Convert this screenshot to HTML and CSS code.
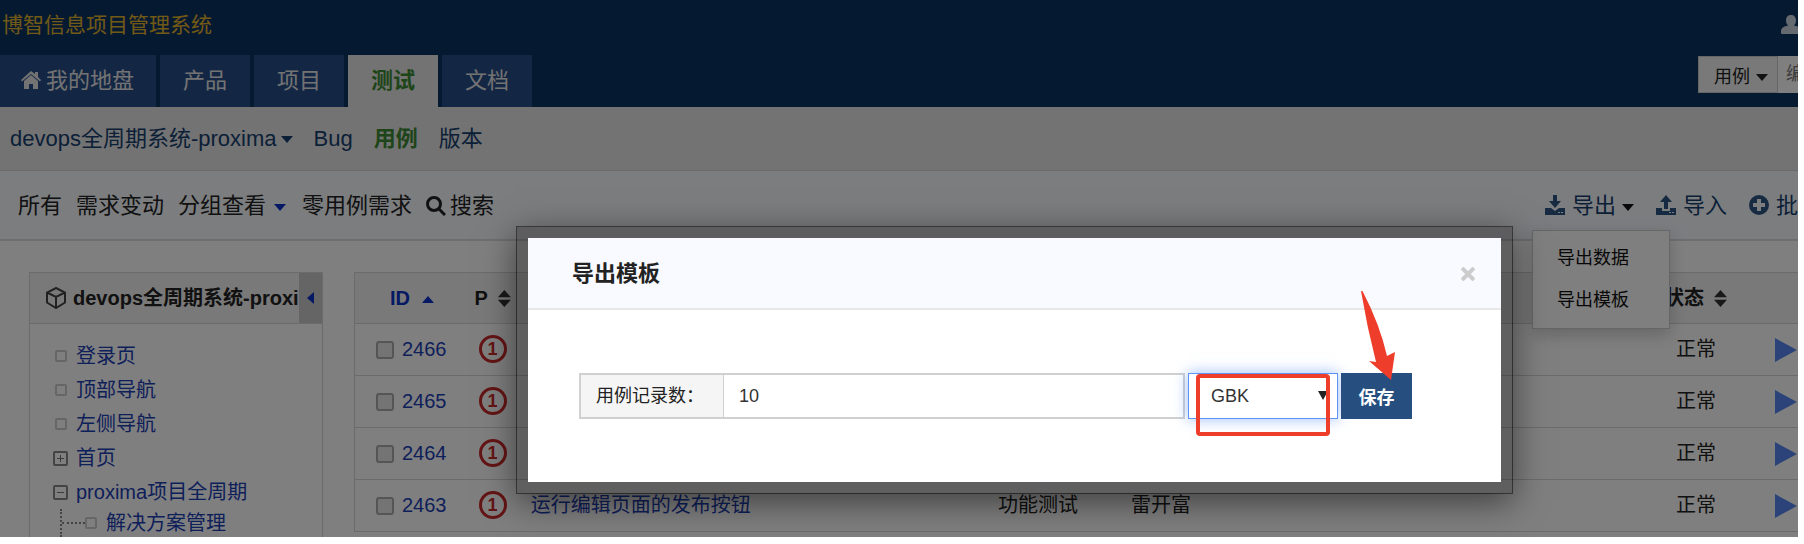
FILE: index.html
```html
<!DOCTYPE html>
<html lang="zh-CN">
<head>
  <meta charset="UTF-8" />
  <meta name="viewport" content="width=device-width, initial-scale=1.0"/>
  <title>导出模板</title>
  <link rel="stylesheet" href="styles.css">
</head>
<body>
  <div class="app">

    <!-- 顶部 -->
    <header class="header">
      <div class="topbar">
        <h1>博智信息项目管理系统</h1>
        <svg class="user" viewBox="0 0 20 19"><path d="M10 0c3 0 5 2 5 5.500c0 2-1 4-2 5c4 1 7 2 7 6V18q0 1-1 1H1q-1 0-1-1v-1.500c0-4 3-5 7-6c-1-1-2-3-2-5C5 2 7 0 10 0z"/></svg>
      </div>
      <div class="mainbar">
        <nav class="tabs">
          <a href="#" class="home"><svg viewBox="0 0 20 18"><path d="M10 0l4 3V1h3v5l3 3-1 1.500L10 3 1 10.500 0 9zM10 4l7 6v8h-5v-5H8v5H3v-8z"/></svg>我的地盘</a>
          <a href="#">产品</a>
          <a href="#">项目</a>
          <a href="#" class="active">测试</a>
          <a href="#">文档</a>
        </nav>
        <form class="search">
          <button type="button">用例<i class="caret"></i></button>
          <input type="text" placeholder="编" aria-label="编号" />
        </form>
      </div>
    </header>

    <nav class="module-menu">
      <a href="#" class="product">devops全周期系统-proxima<i class="caret"></i></a>
      <a href="#">Bug</a>
      <a href="#" class="active">用例</a>
      <a href="#">版本</a>
    </nav>

    <!-- 工具栏 -->
    <div class="toolbar">
      <div class="filters">
        <a href="#">所有</a>
        <a href="#">需求变动</a>
        <a href="#">分组查看<i class="caret blue"></i></a>
        <a href="#">零用例需求</a>
        <a href="#" class="find"><svg viewBox="0 0 20 20"><circle cx="8" cy="8" r="6.500"/><path d="M13 13l6 6"/></svg>搜索</a>
      </div>
      <div class="operations">
        <div class="dropdown">
          <a href="#"><svg viewBox="0 0 20 20"><path d="M8 0h4v6h4l-6 7-6-7h4zM0 13h6l4 3 4-3h6v7H0zM13 17v1h2v-1zM16 17v1h2v-1z"/></svg>导出<i class="caret"></i></a>
          <ul class="dropdown-menu">
            <li><a href="#">导出数据</a></li>
            <li><a href="#">导出模板</a></li>
          </ul>
        </div>
        <a href="#" class="import"><svg viewBox="0 0 20 20"><path d="M10 0l6 7h-4v7H8V7H4zM0 13h6v3h8v-3h6v7H0zM13 17v1h2v-1zM16 17v1h2v-1z"/></svg>导入</a>
        <a href="#" class="batch"><svg viewBox="0 0 20 20"><path fill-rule="evenodd" d="M10 0a10 10 0 1 1 0 20a10 10 0 1 1 0-20zM8 4v4H4v4h4v4h4v-4h4V8h-4V4z"/></svg>批</a>
      </div>
    </div>

    <!-- 内容 -->
    <main class="content">
      <aside class="side">
        <div class="side-head">
          <svg viewBox="0 0 22 22"><path d="M11 1l9 4.500v10L11 21l-9-5.500v-10zM2 5.500l9 4.500 9-4.500M11 10v11"/></svg>
          <strong>devops全周期系统-proxima</strong>
          <button type="button" class="collapse" aria-label="收起"></button>
        </div>
        <ul class="tree">
          <li><i class="leaf"></i><a href="#">登录页</a></li>
          <li><i class="leaf"></i><a href="#">顶部导航</a></li>
          <li><i class="leaf"></i><a href="#">左侧导航</a></li>
          <li><i class="node plus"></i><a href="#">首页</a></li>
          <li><i class="node"></i><a href="#">proxima项目全周期</a></li>
        </ul>
        <ul class="tree children">
          <li><i class="leaf"></i><a href="#">解决方案管理</a></li>
        </ul>
      </aside>

      <table class="cases">
        <colgroup>
          <col class="c-id"><col class="c-pri"><col><col class="c-type"><col class="c-user"><col class="c-status"><col class="c-act">
        </colgroup>
        <thead>
          <tr>
            <th class="id"><a href="#">ID<i class="caret up"></i></a></th>
            <th class="pri">P<i class="sort"></i></th>
            <th></th>
            <th></th>
            <th></th>
            <th class="status">状态<i class="sort"></i></th>
            <th></th>
          </tr>
        </thead>
        <tbody>
          <tr>
            <td><label><input type="checkbox"><a href="#">2466</a></label></td>
            <td><span class="pri-1">1</span></td>
            <td></td><td></td><td></td>
            <td class="status">正常</td>
            <td class="act"><i class="play"></i></td>
          </tr>
          <tr>
            <td><label><input type="checkbox"><a href="#">2465</a></label></td>
            <td><span class="pri-1">1</span></td>
            <td></td><td></td><td></td>
            <td class="status">正常</td>
            <td class="act"><i class="play"></i></td>
          </tr>
          <tr>
            <td><label><input type="checkbox"><a href="#">2464</a></label></td>
            <td><span class="pri-1">1</span></td>
            <td></td><td></td><td></td>
            <td class="status">正常</td>
            <td class="act"><i class="play"></i></td>
          </tr>
          <tr>
            <td><label><input type="checkbox"><a href="#">2463</a></label></td>
            <td><span class="pri-1">1</span></td>
            <td><a href="#">运行编辑页面的发布按钮</a></td>
            <td>功能测试</td>
            <td>雷开富</td>
            <td class="status">正常</td>
            <td class="act"><i class="play"></i></td>
          </tr>
        </tbody>
      </table>
    </main>

    <!-- 弹窗 -->
    <div class="backdrop">
      <div class="modal">
        <div class="modal-head">
          <h2>导出模板</h2>
          <button type="button" class="close" aria-label="关闭"><svg viewBox="0 0 14 14"><path d="M1 1l12 12M13 1L1 13"/></svg></button>
        </div>
        <form class="export-form">
          <label for="num">用例记录数：</label>
          <input type="text" id="num" value="10" />
          <div class="encode">
            <select aria-label="编码">
              <option>GBK</option>
              <option>UTF-8</option>
            </select>
            <span class="mark"></span>
          </div>
          <div class="save">
            <button type="submit">保存</button>
            <svg class="arrow" viewBox="0 0 36 90"><path d="M1 0Q2-1 3 1Q20 34 27 65L35 61 31 89 9 70 16 71Q7 36 1 0z"/></svg>
          </div>
        </form>
      </div>
    </div>

  </div>
</body>
</html>
```

FILE: styles.css
```css
* {
  box-sizing: border-box;
}

body {
  margin: 0 6px 7px 0;
  background: #fff;
  font-family: "Liberation Sans", "Noto Sans CJK SC", sans-serif;
  font-size: 20px;
  line-height: 24px;
  color: #222;
}

a {
  color: inherit;
  text-decoration: none;
}

ul {
  list-style: none;
  margin: 0;
  padding: 0;
}

input, select, button {
  font-family: inherit;
  font-size: 18px;
  border-radius: 0;
}

.app {
  position: relative;
  height: calc(100vh - 7px);
  overflow: hidden;
}

.caret {
  display: inline-block;
  border: 6px solid transparent;
  border-top: 7px solid currentColor;
  border-bottom: 0;
  margin-left: 6px;
  vertical-align: middle;
}

.caret.up {
  border-top: 0;
  border-bottom: 7px solid currentColor;
  margin-left: 12px;
}

.caret.blue {
  color: #0a32c8;
  margin: 0 2px 0 8px;
}

/* 顶部 */
.header {
  background: #0a3262;
}

.topbar {
  display: flex;
  justify-content: space-between;
  align-items: center;
  height: 55px;
  padding-bottom: 6px;
  overflow: hidden;
}

.topbar h1 {
  margin: 0 0 0 2px;
  font-size: 21px;
  font-weight: normal;
  color: #e2b32c;
}

.user {
  width: 20px;
  height: 19px;
  margin-right: -3px;
  fill: #c8d4e0;
}

.mainbar {
  display: flex;
  justify-content: space-between;
  align-items: flex-start;
}

.tabs {
  display: flex;
  gap: 4px;
}

.tabs a {
  padding: 0 23px;
  background: #264e8a;
  color: #e6e6e6;
  font-size: 22px;
  line-height: 52px;
}

.tabs .home {
  padding-left: 21px;
  padding-right: 22px;
}

.tabs svg {
  width: 20px;
  height: 18px;
  margin-right: 5px;
  fill: currentColor;
  vertical-align: -1px;
}

.tabs .active {
  background: #e6e6e6;
  color: #3d8a32;
  font-weight: bold;
}

.search {
  display: flex;
  height: 37px;
  margin-top: 1px;
}

.search button {
  width: 80px;
  padding: 0 0 0 6px;
  border: 1px solid #ccc;
  background: #f2f2f2;
  color: #222;
}

.search input {
  width: 20px;
  padding: 0 0 0 8px;
  border: 0;
  background: #fff;
}

.module-menu {
  display: flex;
  align-items: center;
  gap: 21px;
  height: 63px;
  padding-left: 10px;
  background: #e6e6e6;
  color: #17406f;
  font-size: 22px;
}

.module-menu .active {
  color: #3d8a32;
  font-weight: bold;
}

.module-menu .caret {
  margin-left: 4px;
}

/* 工具栏 */
.toolbar {
  display: flex;
  justify-content: space-between;
  align-items: center;
  height: 71px;
  padding: 2px 0 0 18px;
  background: #f8faff;
  border-top: 1px solid #d4d4d4;
  border-bottom: 2px solid #dcdcdc;
  font-size: 22px;
}

.filters, .operations {
  display: flex;
  gap: 14px;
}

.filters svg {
  width: 20px;
  height: 20px;
  margin-right: 4px;
  fill: none;
  stroke: #222;
  stroke-width: 3;
  vertical-align: -3px;
}

.operations {
  gap: 22px;
  color: #17406f;
}

.operations svg {
  width: 20px;
  height: 20px;
  margin-right: 7px;
  fill: #2c5482;
  fill-rule: evenodd;
  vertical-align: -2px;
}

.operations .caret {
  color: #111;
}

.dropdown {
  position: relative;
}

.dropdown-menu {
  position: absolute;
  top: 36px;
  left: -13px;
  width: 138px;
  padding: 6px 0 7px;
  border: 1px solid #ccc;
  background: #fff;
  box-shadow: 0 6px 16px rgba(0, 0, 0, .2);
  font-size: 18px;
  line-height: 42px;
  color: #111;
}

.dropdown-menu a {
  padding-left: 24px;
}

/* 内容 */
.content {
  display: flex;
  align-items: flex-start;
  gap: 31px;
  padding: 31px 0 0 29px;
}

.side {
  flex: 0 0 294px;
  min-width: 0;
  height: 300px;
  border: 1px solid #d6d6d6;
}

.side-head {
  display: flex;
  align-items: center;
  height: 51px;
  padding-left: 15px;
  background: #f2f2f2;
  border-bottom: 1px solid #d6d6d6;
}

.side-head svg {
  flex: none;
  width: 22px;
  height: 22px;
  margin-right: 6px;
  fill: none;
  stroke: #444;
  stroke-width: 2;
}

.side-head strong {
  flex: 1;
  min-width: 0;
  overflow: hidden;
  white-space: nowrap;
}

.collapse {
  display: flex;
  flex: none;
  align-items: center;
  justify-content: center;
  align-self: stretch;
  width: 23px;
  padding: 0;
  border: 0;
  background: #cacaca;
}

.collapse::before {
  content: "";
  border: 6px solid transparent;
  border-right: 7px solid #0a32c8;
  border-left: 0;
}

.tree {
  padding: 15px 0 0 23px;
  color: #1c40b4;
}

.tree li {
  display: flex;
  align-items: center;
  height: 34px;
}

.leaf {
  width: 12px;
  height: 12px;
  margin: 0 9px 0 2px;
  border: 2px solid #ccc;
  border-radius: 2px;
}

.node {
  display: flex;
  align-items: center;
  justify-content: center;
  width: 15px;
  height: 15px;
  margin-right: 8px;
  border: 2px solid #888;
  border-radius: 2px;
  background: linear-gradient(#777, #777) center / 7px 1px no-repeat;
}

.plus::before {
  content: "";
  width: 1px;
  height: 7px;
  background: #777;
}

.tree.children {
  margin-left: 30px;
  padding: 0;
  border-left: 2px dotted #888;
}

.children li {
  height: 28px;
}

.children li::before {
  content: "";
  width: 23px;
  border-top: 2px dotted #888;
}

.children .leaf {
  margin-left: 0;
}

.cases {
  flex: 1;
  min-width: 0;
  table-layout: fixed;
  border-collapse: collapse;
  border-left: 1px solid #d6d6d6;
}

.c-id { width: 110px; }
.c-pri { width: 56px; }
.c-type { width: 133px; }
.c-user { width: 537px; }
.c-status { width: 102px; }
.c-act { width: 38px; }

.cases th {
  height: 51px;
  padding: 0 10px;
  background: #f2f2f2;
  border-top: 1px solid #d6d6d6;
  border-bottom: 1px solid #d6d6d6;
  text-align: left;
  white-space: nowrap;
}

.cases td {
  height: 52px;
  padding: 0 10px 2px;
  border-bottom: 1px solid #d6d6d6;
  white-space: nowrap;
}

.cases a {
  color: #1c40b4;
}

.cases .id {
  padding-left: 35px;
}

.cases th a {
  color: #0a32c8;
}

.cases td:first-child {
  padding-left: 21px;
}

.cases label {
  display: flex;
  align-items: center;
  gap: 8px;
}

.cases input {
  appearance: none;
  width: 18px;
  height: 18px;
  margin: 2px 0 0;
  border: 2px solid #aaa;
  border-radius: 3px;
  background: #e8e8e8;
}

.cases .status {
  padding-left: 18px;
}

.cases th.status {
  padding-left: 6px;
}

.cases .act {
  padding: 0 0 0 15px;
}

.sort {
  display: inline-block;
  width: 13px;
  height: 17px;
  margin-left: 10px;
  background: #333;
  clip-path: polygon(50% 0, 100% 42%, 0 42%, 0 58%, 100% 58%, 50% 100%, 0 58%, 0 42%);
  vertical-align: -2px;
}

.pri-1 {
  display: flex;
  align-items: center;
  justify-content: center;
  width: 28px;
  height: 28px;
  margin-left: 4px;
  border: 3px solid #c92a2a;
  border-radius: 50%;
  color: #c92a2a;
  font-size: 18px;
  font-weight: bold;
}

.play {
  display: block;
  width: 0;
  border: 12px solid transparent;
  border-left: 22px solid #5687f0;
  border-right: 0;
}

/* 弹窗 */
.backdrop {
  position: absolute;
  inset: 0;
  padding: 226px 285px 0 516px;
  background: rgba(0, 0, 0, .5);
}

.modal {
  border: 12px solid rgba(0, 0, 0, .25);
  background: #fff;
  background-clip: padding-box;
  outline: 1px solid rgba(0, 0, 0, .3);
  outline-offset: -1px;
  box-shadow: 0 8px 32px rgba(0, 0, 0, .5);
}

.modal-head {
  display: flex;
  justify-content: space-between;
  align-items: center;
  height: 72px;
  padding: 2px 26px 0 44px;
  background: #f8faff;
  border-bottom: 2px solid #e8e8e8;
}

.modal-head h2 {
  margin: 0;
  font-size: 22px;
  font-weight: bold;
}

.close {
  display: flex;
  padding: 0;
  border: 0;
  background: none;
}

.close svg {
  width: 14px;
  height: 14px;
  stroke: #ccc;
  stroke-width: 4;
}

.export-form {
  display: flex;
  height: 172px;
  padding: 63px 89px 63px 51px;
  font-size: 18px;
}

.export-form label {
  width: 145px;
  padding-left: 15px;
  border: 2px solid #d0d0d0;
  border-right-width: 1px;
  background: #f5f5f5;
  line-height: 42px;
}

.export-form input {
  flex: 1;
  min-width: 0;
  padding: 0 15px;
  border: 2px solid #d0d0d0;
  border-left: 0;
  color: #333;
}

.encode {
  position: relative;
  width: 150px;
  margin: 0 3px;
}

.encode::after {
  content: "";
  position: absolute;
  top: 18px;
  right: 10px;
  border: 5px solid transparent;
  border-top: 9px solid #222;
  border-bottom: 0;
}

.encode select {
  appearance: none;
  width: 100%;
  height: 100%;
  padding: 0 22px;
  border: 1px solid #5c93f5;
  background: #fff;
  box-shadow: 0 0 14px rgba(92, 147, 245, .6);
  color: #333;
}

.mark {
  position: absolute;
  z-index: 1;
  top: 1px;
  left: 8px;
  width: 134px;
  height: 62px;
  border: 4px solid #ee3d2a;
  border-radius: 4px;
}

.save {
  position: relative;
}

.save button {
  width: 71px;
  height: 100%;
  padding: 0;
  border: 0;
  background: #264f80;
  color: #fff;
  font-weight: bold;
}

.arrow {
  position: absolute;
  left: 19px;
  bottom: 38px;
  width: 36px;
  height: 90px;
  fill: #ee3d2a;
}
```
